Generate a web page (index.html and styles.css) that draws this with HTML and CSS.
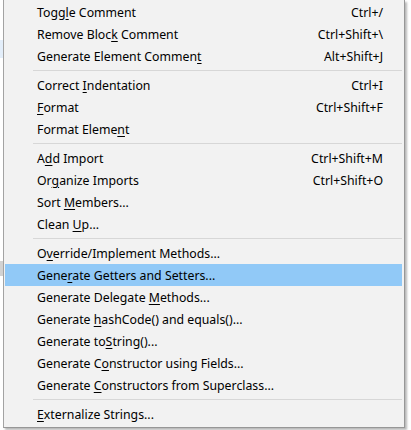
FILE: index.html
```html
<!DOCTYPE html>
<html>
<head>
<meta charset="utf-8">
<link rel="stylesheet" href="styles.css">
</head>
<body>
<div class="page">
  <div class="backdrop">
    <div class="gap g40"></div>
    <div class="band blue"></div>
    <div class="gap g185"></div>
    <div class="band grey"></div>
  </div>
  <div class="menu">
    <div class="item"><span class="label">Togg<u>l</u>e Comment</span><span class="key">Ctrl+/</span></div>
    <div class="item"><span class="label">Remove Bloc<u>k</u> Comment</span><span class="key">Ctrl+Shift+\</span></div>
    <div class="item"><span class="label">Generate Element Commen<u>t</u></span><span class="key">Alt+Shift+J</span></div>
    <div class="sep"></div>
    <div class="item"><span class="label">Correct <u>I</u>ndentation</span><span class="key">Ctrl+I</span></div>
    <div class="item"><span class="label"><u>F</u>ormat</span><span class="key">Ctrl+Shift+F</span></div>
    <div class="item"><span class="label">Format Eleme<u>n</u>t</span></div>
    <div class="sep"></div>
    <div class="item"><span class="label">A<u>d</u>d Import</span><span class="key">Ctrl+Shift+M</span></div>
    <div class="item"><span class="label">Or<u>g</u>anize Imports</span><span class="key">Ctrl+Shift+O</span></div>
    <div class="item"><span class="label">Sort <u>M</u>embers...</span></div>
    <div class="item"><span class="label">Clean <u>U</u>p...</span></div>
    <div class="sep"></div>
    <div class="item"><span class="label">O<u>v</u>erride/Implement Methods...</span></div>
    <div class="item active"><span class="label">Gene<u>r</u>ate Getters and Setters...</span></div>
    <div class="item"><span class="label">Generate Delegate <u>M</u>ethods...</span></div>
    <div class="item"><span class="label">Generate <u>h</u>ashCode() and equals()...</span></div>
    <div class="item"><span class="label">Generate to<u>S</u>tring()...</span></div>
    <div class="item"><span class="label">Generate C<u>o</u>nstructor using Fields...</span></div>
    <div class="item"><span class="label">Generate <u>C</u>onstructors from Superclass...</span></div>
    <div class="sep"></div>
    <div class="item"><span class="label"><u>E</u>xternalize Strings...</span></div>
  </div>
</div>
</body>
</html>
```

FILE: styles.css
```css
html, body {
  margin: 0;
  padding: 0;
  background: #ffffff;
}

.page {
  width: 411px;
  height: 430px;
  display: flex;
  align-items: flex-start;
  overflow: hidden;
  font-family: "Noto Sans", "Liberation Sans", sans-serif;
  font-size: 12.3px;
  color: #000000;
}

.backdrop {
  width: 3px;
  display: flex;
  flex-direction: column;
  flex: none;
}

.gap.g40 { height: 40px; }
.gap.g185 { height: 203px; }

.band { height: 18px; }
.band.blue { background: #e3eefa; }
.band.grey { height: 15px; background: #d2d2d2; }

.menu {
  width: 400px;
  flex: none;
  background: #f2f2f2;
  border-left: 1px solid #a3a3a3;
  border-right: 1px solid #979797;
  border-bottom: 1px solid #979797;
  padding: 1px 0 2px 0;
  box-shadow: 2px 2px 2px rgba(0, 0, 0, 0.28);
}

.item {
  box-sizing: border-box;
  height: 22px;
  margin: 0 2px 0 1px;
  padding: 2px 19px 0 32px;
  display: flex;
  align-items: center;
  justify-content: space-between;
  line-height: 20px;
  white-space: nowrap;
}

.item.active {
  background: #91c9f7;
}

.item u {
  text-decoration: underline;
  text-underline-offset: 2px;
}

.sep {
  height: 1px;
  margin: 3px 2px 3px 29px;
  background: #d7d7d7;
}
```
